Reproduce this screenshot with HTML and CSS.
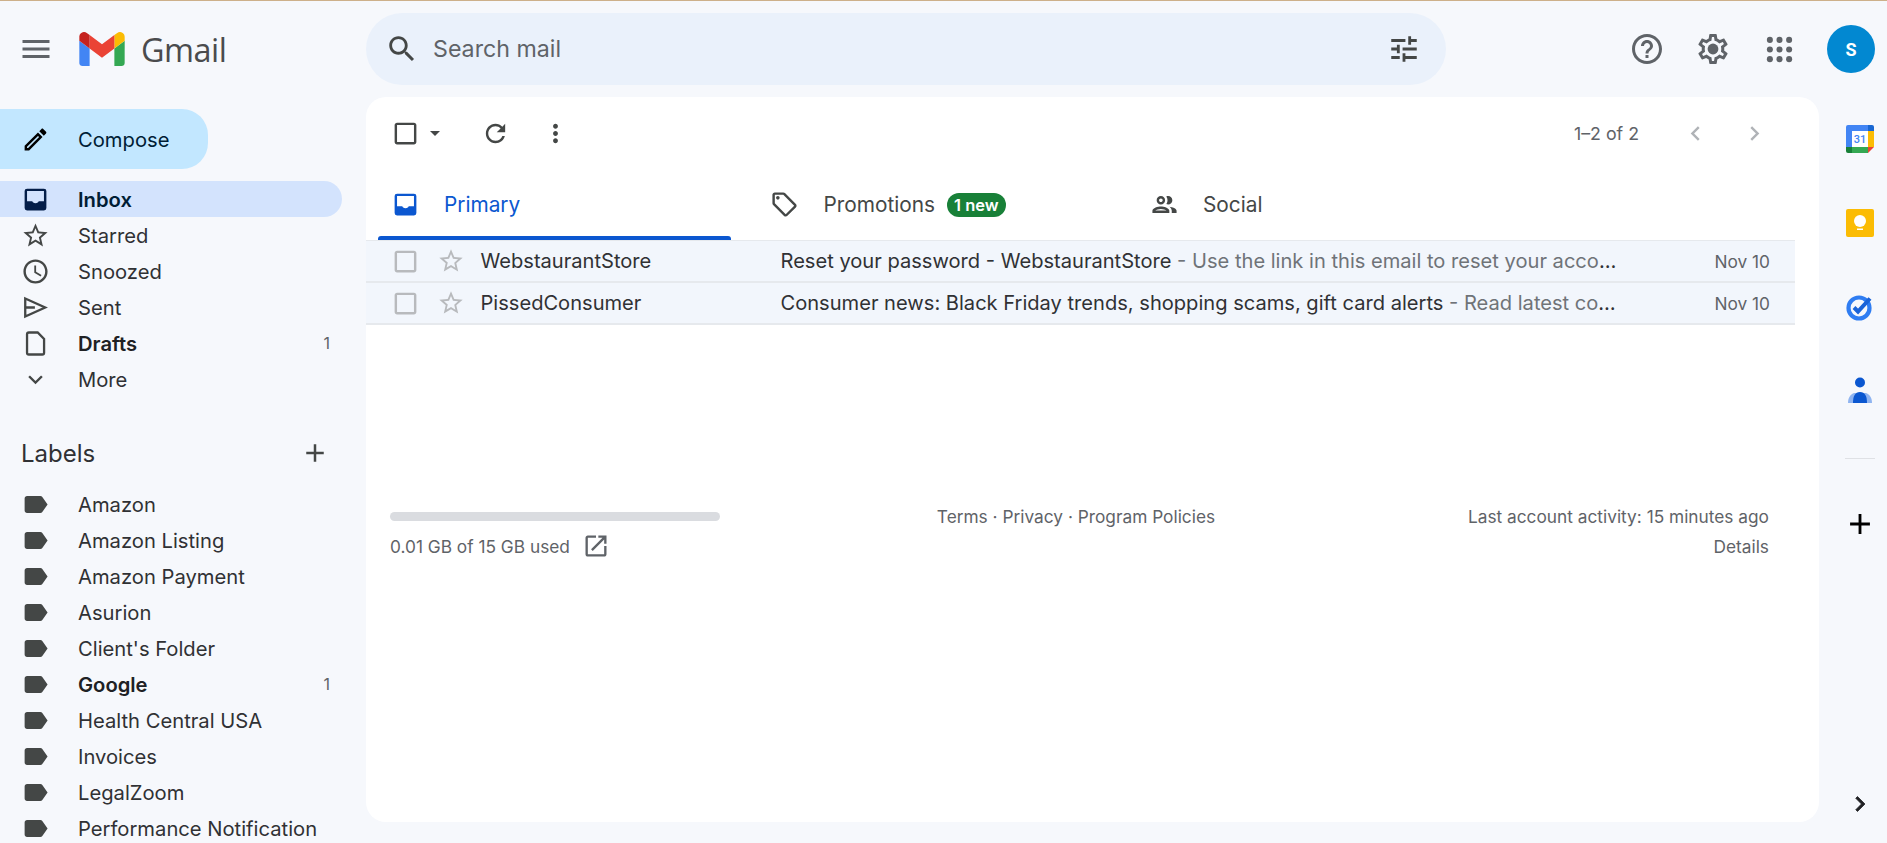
FILE: index.html
```html
<!DOCTYPE html>
<html>
<head>
  <title>Inbox - Gmail</title>
  <link rel="stylesheet" href="styles.css">
</head>
<body>
  <svg class="sprite" xmlns="http://www.w3.org/2000/svg">
    <symbol id="i-menu" viewBox="0 0 24 24"><path d="M3 18h18v-2H3v2zm0-5h18v-2H3v2zm0-7v2h18V6H3z"/></symbol>
    <symbol id="i-search" viewBox="0 0 24 24"><path d="M15.5 14h-.79l-.28-.27C15.41 12.59 16 11.11 16 9.5 16 5.91 13.09 3 9.5 3S3 5.91 3 9.5 5.91 16 9.5 16c1.61 0 3.09-.59 4.23-1.57l.27.28v.79l5 4.99L20.49 19l-4.99-5zm-6 0C7.01 14 5 11.99 5 9.5S7.01 5 9.5 5 14 7.01 14 9.5 11.99 14 9.5 14z"/></symbol>
    <symbol id="i-tune" viewBox="0 0 24 24"><path d="M3 17v2h6v-2H3zM3 5v2h10V5H3zm10 16v-2h8v-2h-8v-2h-2v6h2zM7 9v2H3v2h4v2h2V9H7zm14 4v-2H11v2h10zm-6-4h2V7h4V5h-4V3h-2v6z"/></symbol>
    <symbol id="i-help" viewBox="0 0 24 24"><path d="M11 18h2v-2h-2v2zm1-16C6.48 2 2 6.48 2 12s4.48 10 10 10 10-4.48 10-10S17.52 2 12 2zm0 18c-4.41 0-8-3.59-8-8s3.59-8 8-8 8 3.59 8 8-3.59 8-8 8zm0-14c-2.21 0-4 1.79-4 4h2c0-1.1.9-2 2-2s2 .9 2 2c0 2-3 1.75-3 5h2c0-2.25 3-2.5 3-5 0-2.21-1.79-4-4-4z"/></symbol>
    <symbol id="i-gear" viewBox="0 0 24 24"><path d="M19.43 12.98c.04-.32.07-.64.07-.98 0-.34-.03-.66-.07-.98l2.11-1.65c.19-.15.24-.42.12-.64l-2-3.46c-.09-.16-.26-.25-.44-.25-.06 0-.12.01-.17.03l-2.49 1c-.52-.4-1.08-.73-1.69-.98l-.38-2.65C14.46 2.18 14.25 2 14 2h-4c-.25 0-.46.18-.49.42l-.38 2.65c-.61.25-1.17.59-1.69.98l-2.49-1c-.06-.02-.12-.03-.18-.03-.17 0-.34.09-.43.25l-2 3.46c-.13.22-.07.49.12.64l2.11 1.65c-.04.32-.07.65-.07.98 0 .33.03.66.07.98l-2.11 1.65c-.19.15-.24.42-.12.64l2 3.46c.09.16.26.25.44.25.06 0 .12-.01.17-.03l2.49-1c.52.4 1.08.73 1.69.98l.38 2.65c.03.24.24.42.49.42h4c.25 0 .46-.18.49-.42l.38-2.65c.61-.25 1.17-.59 1.69-.98l2.49 1c.06.02.12.03.18.03.17 0 .34-.09.43-.25l2-3.46c.12-.22.07-.49-.12-.64l-2.11-1.65zm-1.98-1.71c.04.31.05.52.05.73 0 .21-.02.43-.05.73l-.14 1.13.89.7 1.08.84-.7 1.21-1.27-.51-1.04-.42-.9.68c-.43.32-.84.56-1.25.73l-1.06.43-.16 1.13-.2 1.35h-1.4l-.19-1.35-.16-1.13-1.06-.43c-.43-.18-.83-.41-1.23-.71l-.91-.7-1.06.43-1.27.51-.7-1.21 1.08-.84.89-.7-.14-1.13c-.03-.31-.05-.54-.05-.74s.02-.43.05-.73l.14-1.13-.89-.7-1.08-.84.7-1.21 1.27.51 1.04.42.9-.68c.43-.32.84-.56 1.25-.73l1.06-.43.16-1.13.2-1.35h1.39l.19 1.35.16 1.13 1.06.43c.43.18.83.41 1.23.71l.91.7 1.06-.43 1.27-.51.7 1.21-1.07.85-.89.7.14 1.13z"/><circle cx="12" cy="12" r="3.6"/></symbol>
    <symbol id="i-apps" viewBox="0 0 24 24"><circle cx="5" cy="5" r="2.2"/><circle cx="12" cy="5" r="2.2"/><circle cx="19" cy="5" r="2.2"/><circle cx="5" cy="12" r="2.2"/><circle cx="12" cy="12" r="2.2"/><circle cx="19" cy="12" r="2.2"/><circle cx="5" cy="19" r="2.2"/><circle cx="12" cy="19" r="2.2"/><circle cx="19" cy="19" r="2.2"/></symbol>
    <symbol id="i-pencil" viewBox="0 0 24 24"><path d="M3 17.25V21h3.75L17.81 9.94l-3.75-3.75L3 17.25zM5.92 19H5v-.92l9.06-9.06.92.92L5.92 19zM20.71 5.63l-2.34-2.34c-.39-.39-1.02-.39-1.41 0l-1.83 1.83 3.75 3.75 1.83-1.83c.39-.39.39-1.02 0-1.41z"/></symbol>
    <symbol id="i-inbox" viewBox="0 0 24 24"><path d="M19 3H5a2 2 0 0 0-2 2v14a2 2 0 0 0 2 2h14a2 2 0 0 0 2-2V5a2 2 0 0 0-2-2zm0 10.5h-4.4c0 .9-1.1 1.6-2.6 1.6s-2.6-.7-2.6-1.6H5V5h14v8.5z"/></symbol>
    <symbol id="i-star" viewBox="0 0 24 24"><path d="M22 9.24l-7.19-.62L12 2 9.19 8.63 2 9.24l5.46 4.73L5.82 21 12 17.27 18.18 21l-1.63-7.03L22 9.24zM12 15.4l-3.76 2.27 1-4.28-3.32-2.88 4.38-.38L12 6.1l1.71 4.04 4.38.38-3.32 2.88 1 4.28L12 15.4z"/></symbol>
    <symbol id="i-clock" viewBox="0 0 24 24"><path d="M11.99 2C6.47 2 2 6.48 2 12s4.47 10 9.99 10C17.52 22 22 17.52 22 12S17.52 2 11.99 2zM12 20c-4.42 0-8-3.58-8-8s3.58-8 8-8 8 3.58 8 8-3.58 8-8 8zm.5-13H11v6l5.25 3.15.75-1.23-4.5-2.67z"/></symbol>
    <symbol id="i-send" viewBox="0 0 24 24"><path fill="none" stroke="currentColor" stroke-width="1.9" d="M3.5 4.6L20 12 3.5 19.4zM3.5 12h8"/></symbol>
    <symbol id="i-file" viewBox="0 0 24 24"><path fill="none" stroke="currentColor" stroke-width="1.9" d="M6.5 2.9h7.3L19.1 8.2v11.4a1.5 1.5 0 0 1-1.5 1.5H6.5A1.5 1.5 0 0 1 5 19.6V4.4a1.5 1.5 0 0 1 1.5-1.5z"/></symbol>
    <symbol id="i-down" viewBox="0 0 24 24"><path d="M16.59 8.59L12 13.17 7.41 8.59 6 10l6 6 6-6z"/></symbol>
    <symbol id="i-plus" viewBox="0 0 24 24"><path d="M19 13h-6v6h-2v-6H5v-2h6V5h2v6h6v2z"/></symbol>
    <symbol id="i-label" viewBox="0 0 24 24"><path d="M17.63 5.84C17.27 5.33 16.67 5 16 5L5 5.01C3.9 5.01 3 5.9 3 7v10c0 1.1.9 1.99 2 1.99L16 19c.67 0 1.27-.33 1.63-.84L22 12l-4.37-6.16z"/></symbol>
    <symbol id="i-check" viewBox="0 0 24 24"><path d="M19 5v14H5V5h14m0-2H5c-1.1 0-2 .9-2 2v14c0 1.1.9 2 2 2h14c1.1 0 2-.9 2-2V5c0-1.1-.9-2-2-2z"/></symbol>
    <symbol id="i-caret" viewBox="0 0 24 24"><path d="M7 10l5 5 5-5z"/></symbol>
    <symbol id="i-refresh" viewBox="0 0 24 24"><path d="M17.65 6.35C16.2 4.9 14.21 4 12 4c-4.42 0-7.99 3.58-7.99 8s3.57 8 7.99 8c3.73 0 6.84-2.55 7.73-6h-2.08c-.82 2.33-3.04 4-5.65 4-3.31 0-6-2.69-6-6s2.69-6 6-6c1.66 0 3.14.69 4.22 1.78L13 11h7V4l-2.35 2.35z"/></symbol>
    <symbol id="i-dots" viewBox="0 0 24 24"><path d="M12 8c1.1 0 2-.9 2-2s-.9-2-2-2-2 .9-2 2 .9 2 2 2zm0 2c-1.1 0-2 .9-2 2s.9 2 2 2 2-.9 2-2-.9-2-2-2zm0 6c-1.1 0-2 .9-2 2s.9 2 2 2 2-.9 2-2-.9-2-2-2z"/></symbol>
    <symbol id="i-left" viewBox="0 0 24 24"><path d="M15.41 7.41L14 6l-6 6 6 6 1.41-1.41L10.83 12z"/></symbol>
    <symbol id="i-right" viewBox="0 0 24 24"><path d="M10 6L8.59 7.41 13.17 12l-4.58 4.59L10 18l6-6z"/></symbol>
    <symbol id="i-tag" viewBox="0 0 24 24"><path d="M21.41 11.58l-9-9C12.05 2.22 11.55 2 11 2H4c-1.1 0-2 .9-2 2v7c0 .55.22 1.05.59 1.42l9 9c.36.36.86.58 1.41.58s1.05-.22 1.41-.59l7-7c.37-.36.59-.86.59-1.41s-.23-1.06-.59-1.42zM13 20.01L4 11V4h7v-.01l9 9-7 7.02z"/><circle cx="6.5" cy="6.5" r="1.5"/></symbol>
    <symbol id="i-people" viewBox="0 0 24 24"><path d="M9 13.75c-2.34 0-7 1.17-7 3.5V19h14v-1.75c0-2.33-4.66-3.5-7-3.5zM4.34 17c.84-.58 2.87-1.25 4.66-1.25s3.82.67 4.66 1.25H4.34zM9 12c1.93 0 3.5-1.57 3.5-3.5S10.93 5 9 5 5.5 6.57 5.5 8.5 7.07 12 9 12zm0-5c.83 0 1.5.67 1.5 1.5S9.83 10 9 10s-1.5-.67-1.5-1.5S8.17 7 9 7zm7.04 6.81c1.16.84 1.96 1.96 1.96 3.44V19h4v-1.75c0-2.02-3.5-3.17-5.96-3.44zM15 12c1.93 0 3.5-1.57 3.5-3.5S16.93 5 15 5c-.54 0-1.04.13-1.5.35.63.89 1 1.98 1 3.15s-.37 2.26-1 3.15c.46.22.96.35 1.5.35z"/></symbol>
    <symbol id="i-open" viewBox="0 0 24 24"><path d="M19 19H5V5h7V3H5c-1.11 0-2 .9-2 2v14c0 1.1.89 2 2 2h14c1.1 0 2-.9 2-2v-7h-2v7zM14 3v2h3.59l-9.83 9.83 1.41 1.41L19 6.41V10h2V3h-7z"/></symbol>
  </svg>

  <header class="topbar">
    <div class="brand">
      <svg class="ico ico-menu"><use href="#i-menu"/></svg>
      <svg class="logo" viewBox="52 42 88 66">
        <path fill="#4285f4" d="M58 108h14V74L52 59v43c0 3.32 2.69 6 6 6"/>
        <path fill="#34a853" d="M120 108h14c3.32 0 6-2.69 6-6V59l-20 15"/>
        <path fill="#fbbc04" d="M120 48v26l20-15v-8c0-7.42-8.47-11.65-14.4-7.2"/>
        <path fill="#ea4335" d="M72 74V48l24 18 24-18v26L96 92"/>
        <path fill="#c5221f" d="M52 51v8l20 15V48l-5.6-4.2c-5.94-4.45-14.4-.22-14.4 7.2"/>
      </svg>
      <span class="brand-name">Gmail</span>
    </div>
    <div class="search">
      <svg class="ico ico-search"><use href="#i-search"/></svg>
      <span class="search-text">Search mail</span>
      <svg class="ico ico-tune"><use href="#i-tune"/></svg>
    </div>
    <div class="top-actions">
      <svg class="ico ico-top"><use href="#i-help"/></svg>
      <svg class="ico ico-top"><use href="#i-gear"/></svg>
      <svg class="ico ico-top ico-apps"><use href="#i-apps"/></svg>
      <div class="avatar">S</div>
    </div>
  </header>

  <div class="layout">
    <aside class="sidebar">
      <div class="compose">
        <svg class="ico ico-pencil"><use href="#i-pencil"/></svg>
        <span>Compose</span>
      </div>
      <ul class="nav">
        <li class="nav-item active"><svg class="ico"><use href="#i-inbox"/></svg><span class="nav-name">Inbox</span></li>
        <li class="nav-item"><svg class="ico"><use href="#i-star"/></svg><span class="nav-name">Starred</span></li>
        <li class="nav-item"><svg class="ico"><use href="#i-clock"/></svg><span class="nav-name">Snoozed</span></li>
        <li class="nav-item"><svg class="ico"><use href="#i-send"/></svg><span class="nav-name">Sent</span></li>
        <li class="nav-item bold"><svg class="ico"><use href="#i-file"/></svg><span class="nav-name">Drafts</span><span class="count">1</span></li>
        <li class="nav-item"><svg class="ico"><use href="#i-down"/></svg><span class="nav-name">More</span></li>
      </ul>
      <div class="labels-head">
        <span>Labels</span>
        <svg class="ico ico-add"><use href="#i-plus"/></svg>
      </div>
      <ul class="nav labels">
        <li class="nav-item"><svg class="ico"><use href="#i-label"/></svg><span class="nav-name">Amazon</span></li>
        <li class="nav-item"><svg class="ico"><use href="#i-label"/></svg><span class="nav-name">Amazon Listing</span></li>
        <li class="nav-item"><svg class="ico"><use href="#i-label"/></svg><span class="nav-name">Amazon Payment</span></li>
        <li class="nav-item"><svg class="ico"><use href="#i-label"/></svg><span class="nav-name">Asurion</span></li>
        <li class="nav-item"><svg class="ico"><use href="#i-label"/></svg><span class="nav-name">Client's Folder</span></li>
        <li class="nav-item bold"><svg class="ico"><use href="#i-label"/></svg><span class="nav-name">Google</span><span class="count">1</span></li>
        <li class="nav-item"><svg class="ico"><use href="#i-label"/></svg><span class="nav-name">Health Central USA</span></li>
        <li class="nav-item"><svg class="ico"><use href="#i-label"/></svg><span class="nav-name">Invoices</span></li>
        <li class="nav-item"><svg class="ico"><use href="#i-label"/></svg><span class="nav-name">LegalZoom</span></li>
        <li class="nav-item"><svg class="ico"><use href="#i-label"/></svg><span class="nav-name">Performance Notification</span></li>
      </ul>
    </aside>

    <main class="card">
      <div class="toolbar">
        <svg class="ico ico-box"><use href="#i-check"/></svg>
        <svg class="ico ico-caret"><use href="#i-caret"/></svg>
        <svg class="ico ico-refresh"><use href="#i-refresh"/></svg>
        <svg class="ico ico-dots"><use href="#i-dots"/></svg>
        <span class="pager">1–2 of 2</span>
        <svg class="ico ico-page"><use href="#i-left"/></svg>
        <svg class="ico ico-page"><use href="#i-right"/></svg>
      </div>

      <div class="tabs">
        <div class="tab selected"><svg class="ico"><use href="#i-inbox"/></svg><span>Primary</span></div>
        <div class="tab"><svg class="ico"><use href="#i-tag"/></svg><span>Promotions</span><span class="badge">1 new</span></div>
        <div class="tab"><svg class="ico"><use href="#i-people"/></svg><span>Social</span></div>
      </div>

      <div class="rows">
        <div class="row">
          <svg class="ico row-box"><use href="#i-check"/></svg>
          <svg class="ico row-star"><use href="#i-star"/></svg>
          <span class="sender">WebstaurantStore</span>
          <span class="subject">Reset your password - WebstaurantStore <span class="snippet">- Use the link in this email to reset your account password.</span></span>
          <span class="date">Nov 10</span>
        </div>
        <div class="row">
          <svg class="ico row-box"><use href="#i-check"/></svg>
          <svg class="ico row-star"><use href="#i-star"/></svg>
          <span class="sender">PissedConsumer</span>
          <span class="subject">Consumer news: Black Friday trends, shopping scams, gift card alerts <span class="snippet">- Read latest consumer news and reviews.</span></span>
          <span class="date">Nov 10</span>
        </div>
      </div>

      <footer class="foot">
        <div class="storage">
          <div class="storage-bar"></div>
          <div class="storage-text"><span>0.01 GB of 15 GB used</span><svg class="ico ico-open"><use href="#i-open"/></svg></div>
        </div>
        <div class="foot-links">Terms · Privacy · Program Policies</div>
        <div class="foot-activity">
          <div>Last account activity: 15 minutes ago</div>
          <div class="details">Details</div>
        </div>
      </footer>
    </main>

    <aside class="rail">
      <svg class="rail-icon cal" viewBox="0 0 28 28">
        <path fill="#4285f4" d="M2 0h20v6H6v16H0V2a2 2 0 0 1 2-2z"/>
        <path fill="#1967d2" d="M22 0h4a2 2 0 0 1 2 2v4h-6z"/>
        <path fill="#fbbc04" d="M22 6h6v16h-6z"/>
        <path fill="#34a853" d="M6 22h16v6H6z"/>
        <path fill="#188038" d="M0 22h6v6H2a2 2 0 0 1-2-2z"/>
        <path fill="#ea4335" d="M22 22h6l-6 6z"/>
        <path fill="#fff" d="M6 6h16v16H6z"/>
        <text class="cal-num" x="14" y="18.4" text-anchor="middle">31</text>
      </svg>
      <svg class="rail-icon keep" viewBox="0 0 28 28">
        <rect width="28" height="28" rx="2" fill="#fbbc04"/>
        <circle cx="14" cy="12" r="6" fill="#fff"/>
        <path fill="#fff" d="M11 19.5h6V21h-6z"/>
      </svg>
      <svg class="rail-icon tasks" viewBox="0 0 28 28">
        <circle cx="13" cy="15" r="10.5" fill="none" stroke="#2f7df2" stroke-width="4.2"/>
        <path fill="none" stroke="#1a63d8" stroke-width="4" d="M8 14.5l4 4 12-13"/>
      </svg>
      <svg class="rail-icon contacts" viewBox="0 0 28 28">
        <path fill="#8fb4f0" d="M2 26c0-6 3-9 6-10h12c3 1 6 4 6 10z"/>
        <circle cx="14" cy="5.5" r="5" fill="#0b57d0"/>
        <path fill="#0b57d0" d="M7 26c0-7 2-11 7-11s7 4 7 11z"/>
      </svg>
      <div class="rail-line"></div>
      <svg class="ico rail-plus"><use href="#i-plus"/></svg>
      <svg class="ico rail-more"><use href="#i-right"/></svg>
    </aside>
  </div>
</body>
</html>
```

FILE: styles.css
```css
* {
  box-sizing: border-box;
}

html, body {
  height: 100%;
}

body {
  margin: 0;
  display: flex;
  flex-direction: column;
  overflow: hidden;
  background-color: #f6f8fc;
  border-top: 1px solid #cdb08a;
  font-family: "Inter", "Roboto", "Liberation Sans", sans-serif;
  color: #202124;
}

.sprite {
  display: none;
}

.ico {
  display: block;
  flex: none;
  width: 29px;
  height: 29px;
  fill: currentColor;
  color: #444746;
}

ul {
  list-style-type: none;
  margin: 0;
  padding: 0;
}

/* top bar */
.topbar {
  height: 96px;
  flex: none;
  display: flex;
  align-items: center;
}

.brand {
  width: 366px;
  flex: none;
  display: flex;
  align-items: center;
}

.ico-menu {
  width: 36px;
  height: 36px;
  margin-left: 18px;
  color: #5f6368;
}

.logo {
  width: 46px;
  height: 34px;
  margin-left: 25px;
}

.brand-name {
  margin-left: 16px;
  font-family: "Open Sans", sans-serif;
  font-size: 32.4px;
  color: #4a4b4d;
  letter-spacing: -0.5px;
}

.search {
  width: 1080px;
  height: 72px;
  flex: none;
  display: flex;
  align-items: center;
  padding: 0 25px 0 19px;
  background-color: #eaf1fb;
  border-radius: 36px;
}

.ico-search {
  width: 34px;
  height: 34px;
}

.search-text {
  flex-grow: 1;
  margin-left: 14px;
  font-size: 23.2px;
  color: #5f6368;
}

.ico-tune {
  width: 34px;
  height: 34px;
}

.top-actions {
  flex-grow: 1;
  display: flex;
  align-items: center;
  justify-content: flex-end;
  padding-right: 12px;
}

.ico-top {
  width: 36px;
  height: 36px;
  margin-right: 30px;
  color: #5f6368;
}

.ico-apps {
  width: 33px;
  height: 33px;
  margin-left: 2px;
  margin-right: 31px;
}

.avatar {
  width: 48px;
  height: 48px;
  display: flex;
  align-items: center;
  justify-content: center;
  border-radius: 50%;
  background-color: #0288d1;
  color: #fff;
  font-family: "Roboto", sans-serif;
  font-weight: 700;
  font-size: 18px;
}

/* main columns */
.layout {
  flex-grow: 1;
  min-height: 0;
  display: flex;
}

.sidebar {
  width: 366px;
  flex: none;
  overflow: hidden;
}

.compose {
  width: 208px;
  height: 60px;
  margin-top: 12px;
  display: flex;
  align-items: center;
  padding-left: 21px;
  background-color: #c2e7ff;
  border-radius: 0 26px 26px 0;
  color: #001d35;
  font-size: 20.2px;
}

.compose span {
  margin-left: 28px;
}

.ico-pencil {
  color: #000;
}

.nav {
  margin-top: 12px;
  width: 342px;
}

.nav-item {
  height: 36px;
  display: flex;
  align-items: center;
  padding: 0 12px 0 21px;
  font-size: 20.2px;
  color: #303134;
}

.nav-name {
  flex-grow: 1;
  margin-left: 28px;
  white-space: nowrap;
}

.nav-item.active {
  background-color: #d3e3fd;
  border-radius: 0 18px 18px 0;
  color: #001d35;
  font-weight: 600;
}

.nav-item.active .ico {
  color: #041e49;
}

.nav-item.bold {
  font-weight: 600;
  color: #202124;
}

.count {
  font-size: 16px;
  font-weight: 400;
  color: #5f6368;
}

.labels-head {
  width: 342px;
  height: 36px;
  margin-top: 38px;
  display: flex;
  align-items: center;
  justify-content: space-between;
  padding: 0 12px 0 21px;
  font-size: 24px;
  color: #303134;
}

.ico-add {
  width: 30px;
  height: 30px;
}

.labels {
  margin-top: 15px;
}

/* message card */
.card {
  flex-grow: 1;
  margin-bottom: 21px;
  background-color: #fff;
  border-radius: 20px;
  overflow: hidden;
  min-width: 0;
}

.toolbar {
  height: 72px;
  display: flex;
  align-items: center;
  padding: 0 20px 0 24.5px;
}

.ico-caret {
  width: 24px;
  height: 24px;
  margin-left: 3.5px;
}

.ico-refresh {
  margin-left: 33.5px;
}

.ico-dots {
  margin-left: 31px;
}

.pager {
  margin-left: auto;
  margin-right: 42px;
  font-size: 17.8px;
  color: #5f6368;
}

.ico-page {
  margin-right: 30px;
  color: #b0b3b7;
}

.tabs {
  display: flex;
  height: 71px;
}

.tab {
  position: relative;
  width: 379.5px;
  display: flex;
  align-items: center;
  padding-left: 24.5px;
  font-size: 20.8px;
  color: #444746;
}

.tab span:first-of-type {
  margin-left: 24.5px;
}

.tab.selected {
  color: #0b57d0;
}

.tab.selected .ico {
  color: #0b57d0;
}

.tab.selected::after {
  content: "";
  position: absolute;
  left: 12px;
  bottom: 0;
  width: 353px;
  height: 4px;
  border-radius: 3px 3px 0 0;
  background-color: #0b57d0;
}

.badge {
  margin-left: 12px;
  padding: 0 7px;
  height: 24px;
  line-height: 24px;
  border-radius: 12px;
  background-color: #188038;
  color: #fff;
  font-size: 16.5px;
  font-weight: 600;
}

.rows {
  width: 1429px;
  border-top: 1px solid #e6e9ed;
}

.row {
  height: 42px;
  display: flex;
  align-items: center;
  padding-left: 24.5px;
  background-color: #f2f6fc;
  border-bottom: 2px solid #e6e9ed;
  font-size: 20.1px;
  color: #303134;
}

.row-box {
  color: #b8babd;
}

.row-star {
  width: 28px;
  height: 28px;
  margin-left: 17px;
  color: #b8babd;
}

.sender {
  width: 300px;
  flex: none;
  margin-left: 16px;
}

.subject {
  width: 845px;
  flex: none;
  overflow: hidden;
  white-space: nowrap;
  text-overflow: ellipsis;
}

.snippet {
  color: #6f7378;
}

.date {
  margin-left: auto;
  margin-right: 25px;
  font-size: 17.3px;
  color: #5f6368;
}

/* footer */
.foot {
  display: flex;
  justify-content: space-between;
  margin-top: 180px;
  width: 1429px;
  padding: 0 26px 0 24px;
  font-size: 17.3px;
  color: #5f6368;
}

.storage {
  width: 330px;
  padding-top: 7px;
}

.storage-bar {
  height: 9px;
  border-radius: 5px;
  background-color: #dadce0;
}

.storage-text {
  display: flex;
  align-items: center;
  margin-top: 11px;
  white-space: nowrap;
}

.ico-open {
  margin-left: 12px;
  width: 28px;
  height: 28px;
  color: #5f6368;
}

.foot-links {
  padding-top: 1px;
  margin-right: 36px;
}

.foot-activity {
  padding-top: 1px;
  text-align: right;
}

.details {
  margin-top: 9px;
}

/* right rail */
.rail {
  width: 68px;
  flex: none;
  display: flex;
  flex-direction: column;
  align-items: center;
  padding-left: 14px;
}

.rail-icon {
  display: block;
  width: 28px;
  height: 28px;
  flex: none;
}

.cal {
  margin-top: 28px;
}

.cal-num {
  font-family: "Roboto", sans-serif;
  font-size: 11px;
  font-weight: 500;
  fill: #4285f4;
}

.keep,
.tasks,
.contacts {
  margin-top: 56px;
}

.rail-line {
  width: 30px;
  height: 1px;
  margin-top: 53px;
  background-color: #dfe1e5;
}

.rail-plus {
  width: 34px;
  height: 34px;
  margin-top: 48px;
  color: #000;
}

.rail-more {
  width: 30px;
  height: 30px;
  margin-top: auto;
  margin-bottom: 24px;
  color: #202124;
  stroke: currentColor;
  stroke-width: 0.6;
}
```
